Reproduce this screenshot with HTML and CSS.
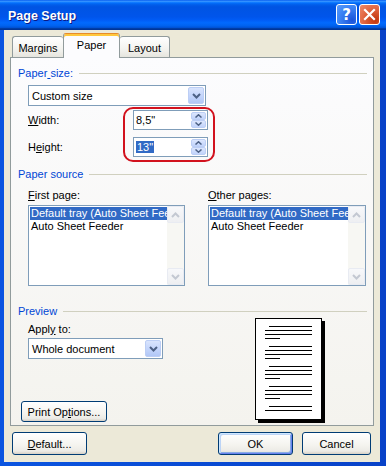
FILE: index.html
```html
<!DOCTYPE html>
<html lang="en">
<head>
    <meta charset="UTF-8">
    <title>Page Setup</title>
    <link rel="stylesheet" href="styles.css">
</head>
<body>

<div class="window">
    <div class="titlebar">
        <span class="title">Page Setup</span>
        <div class="caption-btns">
            <span class="cap-btn help">?</span>
            <span class="cap-btn close">
                <svg width="13" height="13" viewBox="0 0 13 13">
                    <path d="M2 2 L11 11 M11 2 L2 11" stroke="#fff" stroke-width="2.2" stroke-linecap="square"/>
                </svg>
            </span>
        </div>
    </div>

    <div class="client">
        <div class="tabs">
            <div class="tab tab-margins">Margins</div>
            <div class="tab tab-paper active">Paper</div>
            <div class="tab tab-layout">Layout</div>
        </div>

        <div class="panel">
            <div class="group-head"><span>Paper<u> </u>size:</span></div>
            <div class="combo size-combo">
                <span class="combo-text">Custom size</span>
                <span class="drop-btn">
                    <svg width="9" height="6" viewBox="0 0 9 6"><path d="M1 1 L4.5 4.5 L8 1" fill="none" stroke="#4D6185" stroke-width="2"/></svg>
                </span>
            </div>

            <div class="field-row first-field">
                <label><u>W</u>idth:</label>
                <div class="spin">
                    <span class="spin-text">8,5"</span>
                    <span class="spin-btns">
                        <span class="spin-btn"><svg width="7" height="4" viewBox="0 0 7 4"><path d="M0.5 3.5 L3.5 0.8 L6.5 3.5" fill="none" stroke="#4D6185" stroke-width="1.5"/></svg></span>
                        <span class="spin-btn"><svg width="7" height="4" viewBox="0 0 7 4"><path d="M0.5 0.5 L3.5 3.2 L6.5 0.5" fill="none" stroke="#4D6185" stroke-width="1.5"/></svg></span>
                    </span>
                </div>
            </div>
            <div class="field-row second-field">
                <label>H<u>e</u>ight:</label>
                <div class="spin">
                    <span class="spin-text"><span class="selected-text">13"</span></span>
                    <span class="spin-btns">
                        <span class="spin-btn"><svg width="7" height="4" viewBox="0 0 7 4"><path d="M0.5 3.5 L3.5 0.8 L6.5 3.5" fill="none" stroke="#4D6185" stroke-width="1.5"/></svg></span>
                        <span class="spin-btn"><svg width="7" height="4" viewBox="0 0 7 4"><path d="M0.5 0.5 L3.5 3.2 L6.5 0.5" fill="none" stroke="#4D6185" stroke-width="1.5"/></svg></span>
                    </span>
                </div>
            </div>

            <div class="group-head source-head"><span>Paper source</span></div>
            <div class="sources">
                <div class="source-col first-col">
                    <div class="field-label"><u>F</u>irst page:</div>
                    <div class="listbox">
                        <div class="list-items">
                            <div class="item selected">Default tray (Auto Sheet Feeder)</div>
                            <div class="item">Auto Sheet Feeder</div>
                        </div>
                        <div class="scrollbar">
                            <span class="scroll-btn"><svg width="9" height="6" viewBox="0 0 9 6"><path d="M1 5 L4.5 1.5 L8 5" fill="none" stroke="#C3C8D2" stroke-width="2"/></svg></span>
                            <span class="scroll-btn"><svg width="9" height="6" viewBox="0 0 9 6"><path d="M1 1 L4.5 4.5 L8 1" fill="none" stroke="#C3C8D2" stroke-width="2"/></svg></span>
                        </div>
                    </div>
                </div>
                <div class="source-col other-col">
                    <div class="field-label"><u>O</u>ther pages:</div>
                    <div class="listbox">
                        <div class="list-items">
                            <div class="item selected">Default tray (Auto Sheet Feeder)</div>
                            <div class="item">Auto Sheet Feeder</div>
                        </div>
                        <div class="scrollbar">
                            <span class="scroll-btn"><svg width="9" height="6" viewBox="0 0 9 6"><path d="M1 5 L4.5 1.5 L8 5" fill="none" stroke="#C3C8D2" stroke-width="2"/></svg></span>
                            <span class="scroll-btn"><svg width="9" height="6" viewBox="0 0 9 6"><path d="M1 1 L4.5 4.5 L8 1" fill="none" stroke="#C3C8D2" stroke-width="2"/></svg></span>
                        </div>
                    </div>
                </div>
            </div>

            <div class="group-head preview-head"><span>Preview</span></div>
            <div class="preview">
                <div class="preview-left">
                    <div class="field-label apply-label">Appl<u>y</u> to:</div>
                    <div class="combo apply-combo">
                        <span class="combo-text">Whole document</span>
                        <span class="drop-btn">
                            <svg width="9" height="6" viewBox="0 0 9 6"><path d="M1 1 L4.5 4.5 L8 1" fill="none" stroke="#4D6185" stroke-width="2"/></svg>
                        </span>
                    </div>
                    <button class="xp-btn print-btn">Print Op<u>t</u>ions...</button>
                </div>
                <div class="page">
                    <svg width="65" height="100" viewBox="0 0 65 100">
                        <g stroke="#000" stroke-width="1">
                            <path d="M13 7.5 H56 M9 11.5 H56 M9 15.5 H56 M9 19.5 H24"/>
                            <path d="M13 27.5 H56 M9 31.5 H56 M9 35.5 H56 M9 39.5 H24"/>
                            <path d="M13 47.5 H56 M9 51.5 H56 M9 55.5 H56 M9 59.5 H24"/>
                            <path d="M13 67.5 H56 M9 71.5 H56 M9 75.5 H56 M9 79.5 H24"/>
                            <path d="M13 87.5 H56 M9 91.5 H56"/>
                        </g>
                    </svg>
                </div>
            </div>

            <div class="highlight-ring"></div>
        </div>

        <div class="buttons">
            <button class="xp-btn default-btn"><u>D</u>efault...</button>
            <button class="xp-btn ok-btn">OK</button>
            <button class="xp-btn cancel-btn">Cancel</button>
        </div>
    </div>
</div>

</body>
</html>
```

FILE: styles.css
```css
* {
    box-sizing: border-box;
}
body {
    margin: 0;
    padding: 0;
    font-family: "Liberation Sans", Arial, sans-serif;
    font-size: 11px;
    color: #000;
}
u {
    text-decoration: underline;
}
.window {
    width: 386px;
    height: 466px;
    display: flex;
    flex-direction: column;
    background: linear-gradient(to right, #0B55E0, #0842C8);
}
.titlebar {
    height: 30px;
    display: flex;
    justify-content: space-between;
    align-items: center;
    padding: 0 6px 0 8px;
    background: linear-gradient(to bottom, #0058EE 0%, #3A93FF 4%, #288EFF 6%, #127DFF 8%, #036FFC 10%, #0262EE 14%, #0057E5 20%, #0054E3 24%, #0055EB 56%, #005BF5 66%, #026AFE 76%, #0062EF 86%, #0052D6 92%, #0040AB 94%, #003092 100%);
}
.title {
    color: #fff;
    font-weight: bold;
    font-size: 12.5px;
    text-shadow: 1px 1px 0 #0A1883;
    margin-top: 1px;
}
.caption-btns {
    display: flex;
    gap: 2px;
    margin-top: -1px;
}
.cap-btn {
    width: 21px;
    height: 21px;
    border: 1px solid #fff;
    border-radius: 3px;
    display: flex;
    justify-content: center;
    align-items: center;
    color: #fff;
}
.help {
    background: radial-gradient(circle at 80% 80%, #1A52D9, #3D84F5 60%, #5B9BFB);
    font-weight: bold;
    font-size: 15px;
    font-family: "DejaVu Sans", sans-serif;
}
.close {
    background: radial-gradient(circle at 80% 80%, #C2350C, #E36A45 60%, #EE8C6D);
}
.client {
    flex: 1;
    margin: 0 6px 4px 4px;
    padding: 3px 6px 0 6px;
    background-color: #ECE9D8;
    display: flex;
    flex-direction: column;
}
.tabs {
    display: flex;
    align-items: flex-end;
    height: 24px;
    padding-left: 2px;
    position: relative;
    z-index: 1;
}
.tab {
    height: 21px;
    display: flex;
    justify-content: center;
    align-items: center;
    border: 1px solid #919B9C;
    border-bottom: none;
    border-radius: 3px 3px 0 0;
    background: linear-gradient(#FFFFFF, #F3F3EF 60%, #E6E5DE);
    padding-top: 1px;
}
.tab-margins {
    width: 51px;
    border-right: none;
}
.tab-paper {
    width: 57px;
}
.tab-layout {
    width: 50px;
    border-left: none;
}
.tab.active {
    height: 25px;
    margin-bottom: -1px;
    background: #FCFCFE;
    border-top: 1px solid #E68B2C;
    box-shadow: inset 0 2px 0 #FFC73C;
    padding-top: 0;
    padding-bottom: 3px;
}
.panel {
    height: 369px;
    border: 1px solid #919B9C;
    background: linear-gradient(#FCFCFE, #F4F3EE);
    padding: 0 6px 0 7px;
    position: relative;
}
.group-head {
    display: flex;
    align-items: center;
    height: 13px;
    line-height: 13px;
    margin-top: 9px;
    color: #0046D5;
}
.group-head::after {
    content: "";
    flex: 1;
    height: 1px;
    margin-left: 6px;
    background-color: #D0D0BF;
}
.combo {
    height: 21px;
    border: 1px solid #7F9DB9;
    background-color: #fff;
    display: flex;
    align-items: center;
    justify-content: space-between;
    padding: 1px 1px 1px 3px;
    margin-left: 10px;
}
.combo-text {
    padding-top: 1px;
}
.size-combo {
    width: 178px;
    margin-top: 5px;
}
.drop-btn {
    width: 16px;
    height: 17px;
    border: 1px solid #BCCEF5;
    border-radius: 2px;
    background: linear-gradient(#D9E4FD, #C1D3FB 60%, #B1C7F6);
    display: flex;
    justify-content: center;
    align-items: center;
}
.field-row {
    display: flex;
    align-items: center;
    height: 20px;
    margin-left: 10px;
}
.field-row label {
    width: 105px;
}
.first-field {
    margin-top: 4px;
}
.second-field {
    margin-top: 7px;
}
.spin {
    width: 75px;
    height: 20px;
    border: 1px solid #7F9DB9;
    background-color: #fff;
    display: flex;
    align-items: center;
    justify-content: space-between;
    padding: 1px 1px 1px 2px;
}
.selected-text {
    background-color: #316AC5;
    color: #fff;
    padding: 0 1px;
}
.spin-btns {
    width: 15px;
    height: 16px;
    display: flex;
    flex-direction: column;
    gap: 0;
}
.spin-btn {
    flex: 1;
    border: 1px solid #BCCEF5;
    border-radius: 2px;
    background: linear-gradient(#DCE6FD, #C1D3FB);
    display: flex;
    justify-content: center;
    align-items: center;
}
.source-head {
    margin-top: 11px;
}
.sources {
    display: flex;
    margin-left: 10px;
    margin-top: 8px;
}
.field-label {
    height: 13px;
    line-height: 13px;
}
.first-col {
    width: 157px;
}
.other-col {
    width: 158px;
    margin-left: 23px;
}
.listbox {
    height: 81px;
    margin-top: 3px;
    border: 1px solid #7F9DB9;
    background-color: #fff;
    display: flex;
    overflow: hidden;
}
.list-items {
    flex: 1;
    overflow: hidden;
    padding-top: 1px;
    padding-left: 1px;
}
.item {
    height: 13px;
    line-height: 13px;
    white-space: nowrap;
    padding-left: 1px;
}
.item.selected {
    background-color: #316AC5;
    color: #fff;
}
.scrollbar {
    width: 17px;
    background-color: #F7F7F3;
    display: flex;
    flex-direction: column;
    justify-content: space-between;
}
.scroll-btn {
    height: 17px;
    border: 1px solid #E8EBF2;
    border-radius: 2px;
    background: linear-gradient(#F7F8FA, #EEEFF2);
    display: flex;
    justify-content: center;
    align-items: center;
}
.preview-head {
    margin-top: 19px;
}
.preview {
    display: flex;
    align-items: flex-start;
}
.preview-left {
    width: 145px;
    display: flex;
    flex-direction: column;
    align-items: flex-start;
}
.apply-label {
    margin-top: 5px;
    margin-left: 10px;
}
.apply-combo {
    width: 135px;
    margin-top: 2px;
}
.xp-btn {
    font-family: "Liberation Sans", Arial, sans-serif;
    font-size: 11px;
    color: #000;
    height: 23px;
    border: 1px solid #003C74;
    border-radius: 3px;
    background: linear-gradient(#FFFFFF, #F4F3EE 60%, #ECEBE6 86%, #D6D0C5);
    padding: 0;
    cursor: pointer;
}
.print-btn {
    width: 86px;
    height: 21px;
    margin-top: 42px;
    margin-left: 3px;
}
.page {
    width: 67px;
    height: 102px;
    margin-left: 92px;
    border: 1px solid #000;
    background-color: #fff;
    box-shadow: 3px 3px 0 #000;
}
.page svg {
    display: block;
}
.highlight-ring {
    position: absolute;
    left: 112px;
    top: 49px;
    width: 92px;
    height: 55px;
    border: 2px solid #D2121E;
    border-radius: 10px;
}
.buttons {
    display: flex;
    margin-top: 6px;
    padding-left: 2px;
}
.default-btn {
    width: 75px;
}
.ok-btn {
    width: 75px;
    margin-left: auto;
    box-shadow: inset 1px 1px 0 #CEE7FF, inset -1px -1px 0 #6982EE, inset 2px 2px 0 #BCD4F6, inset -2px -2px 0 #89ADE4;
}
.cancel-btn {
    width: 69px;
    margin-left: 9px;
    margin-right: 3px;
}
```
